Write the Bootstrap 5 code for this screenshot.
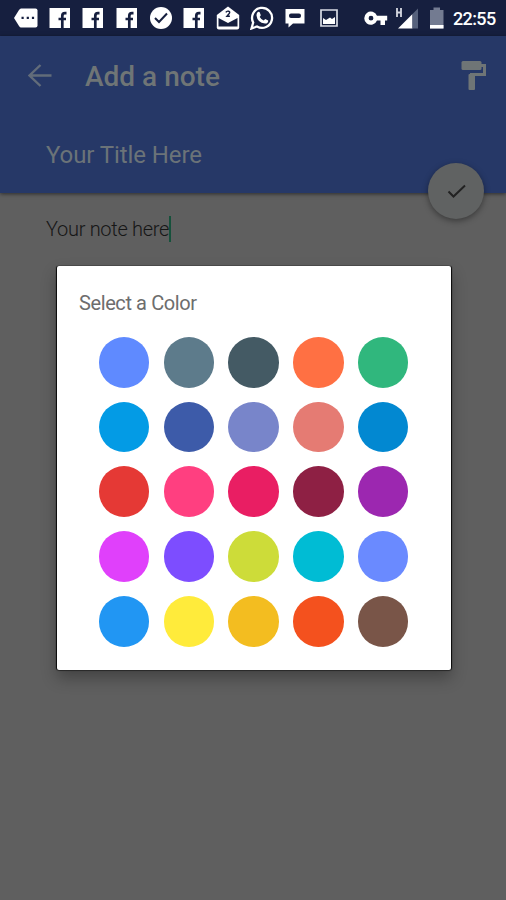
<!DOCTYPE html>
<html lang="en">
<head>
<meta charset="utf-8">
<meta name="viewport" content="width=device-width, initial-scale=1">
<title>Add a note</title>
<link href="https://cdn.jsdelivr.net/npm/bootstrap@5.3.0/dist/css/bootstrap.min.css" rel="stylesheet">
<style>
body{font-family:Roboto,"Noto Sans",sans-serif;background:#5f5f5f;height:900px;overflow:hidden}
svg{display:block;flex:none}
.status-bar{height:36px;background:#161f3f;color:#fff;padding-left:9px}
.notice{width:33.7px;display:flex;justify-content:center}
.status-icons{height:36px}
.sys{width:142px;height:36px;margin-left:18px}
.clock{font-size:18px;font-weight:500;line-height:36px;padding-top:2px;width:44px;letter-spacing:-.6px;white-space:nowrap}
.app-head{height:157px;background:#263867;color:#6f7576;box-shadow:0 1px 4px rgba(0,0,0,.55)}
.toolbar{height:80px;padding:0 19px 0 28px}
.page-name{font-size:28px;font-weight:500;line-height:32px;margin-left:32px;padding-top:1px}
.note-title{font-size:24px;line-height:28px;padding:25px 0 0 46px;color:#6b7378;letter-spacing:-.08px}
.done-btn{position:absolute;right:22px;top:163px;width:56px;height:56px;background:#606262;box-shadow:0 2px 6px rgba(0,0,0,.4)}
.note-text{padding:23px 0 0 46px;font-size:20px;font-weight:300;line-height:27px;color:#161616;letter-spacing:-.3px}
.caret{width:2px;height:26px;background:#16513b}
.picker{position:absolute;left:57px;top:266px;width:394px;height:404px;border-radius:2px;box-shadow:-1px 0 1px #080808,1px 0 1px #080808,0 1px 1px #333,0 8px 16px rgba(0,0,0,.3)}
.picker-title{font-size:20px;line-height:24px;color:#6d6d6d;padding:25px 0 0 22px;letter-spacing:-.4px;font-weight:400}
.swatches{display:grid;grid-template-columns:repeat(5,50.6px);gap:14.15px;padding:22px 0 0 41.8px}
.swatch{height:50.6px}
</style>
<script src="https://cdn.jsdelivr.net/npm/bootstrap@5.3.0/dist/js/bootstrap.bundle.min.js"></script>
</head>
<body class="m-0 position-relative">
<svg width="0" height="0" class="position-absolute"><defs>
<g id="fb"><path fill="#fff" d="M.5 1h20.500v20H.5z"/><path d="M17.500 6.200h-1.500q-2.700 0-2.700 2.800v12M9.500 12H17" fill="none" stroke="#161f3f" stroke-width="2.700"/></g>
</defs></svg>
<div class="status-bar d-flex">
 <div class="status-icons d-flex align-items-center">
  <div class="notice"><svg width="26" height="20" viewBox="0 0 26 20"><path fill="#fff" d="M1 10 6 2q1-1.500 2-1.500h14.500q2 0 2 2v15q0 2-2 2H8q-1 0-2-1.500z"/><path fill="#161f3f" d="M8.500 8.700h2.200v2.400H8.500zm5.200 0h2.200v2.400h-2.200zm5.200 0h2.200v2.400h-2.200z"/></svg></div>
  <div class="notice"><svg width="22" height="22"><use href="#fb"/></svg></div>
  <div class="notice"><svg width="22" height="22"><use href="#fb"/></svg></div>
  <div class="notice"><svg width="22" height="22"><use href="#fb"/></svg></div>
  <div class="notice"><svg width="24" height="24"><circle cx="12" cy="12" r="11" fill="#fff"/><path d="m6 12 4 4 8-8.500" fill="none" stroke="#161f3f" stroke-width="2"/></svg></div>
  <div class="notice"><svg width="22" height="22"><use href="#fb"/></svg></div>
  <div class="notice"><svg width="24" height="24" viewBox="0 0 24 24"><path d="M.8 9 12 .5 23.200 9v12.500q0 2-2 2H2.800q-2 0-2-2z" fill="#fff"/><path d="M2.500 12v8.500h19V12L12 17z" fill="#161f3f"/><path d="M9.800 6.300q1-1.500 2.700-1.100 2 .6.7 2.300l-2.300 2.700h3" fill="none" stroke="#161f3f" stroke-width="1.400"/></svg></div>
  <div class="notice"><svg width="24" height="24"><path d="m1.500 22.500 1.700-6A10 10 0 1 1 7 20.500z" fill="none" stroke="#fff" stroke-width="2.300"/><path d="M7 7q1.500-2 2.700-.8l1.100 3L9.700 11q1.500 2.600 4 3.500l1.500-1.600 3 1.500q.2 3-3.200 3.200Q7.300 16.500 6.500 9.500 6.500 8 7 7z" fill="#fff"/></svg></div>
  <div class="notice"><svg width="20" height="20" viewBox="0 0 20 20"><path fill="#fff" d="M.5 1h19v14.500H8l-4.500 4v-4h-3z"/><rect x="4" y="5.500" width="12" height="4.500" rx="2" fill="#161f3f"/></svg></div>
  <div class="notice"><svg width="20" height="20"><path fill="none" stroke="#d9dce5" stroke-width="1.700" d="M2 2h16v16H2z"/><path fill="#fff" d="m4 10 3 2 4-2.500 2 1.500 3-2v7H4z"/></svg></div>
 </div>
 <div class="sys d-flex align-items-center">
  <svg width="89" height="36"><path fill="#fff" fill-rule="evenodd" d="M13 15.800a6.600 6.600 0 1 0 0 4.700h3.500V25h4.500v-4.500h2.200v-4.700zM7 15.800a2.400 2.400 0 1 1 0 4.800 2.400 2.400 0 0 1 0-4.800z"/><path fill="#fff" d="M48.500 28.500V14L34 28.500z"/><path fill="#56617c" d="m48.500 14 5.500-5.500v20h-5.500z"/><path fill="#737b91" d="M66 10h3.500V7.500h6.500V10h3.500v18.500H66z"/><path fill="#fff" d="M66 25h13.500v3.500H66z"/><path d="M33 8v9M37 8v9M33 12.500h4" fill="none" stroke="#d5d8e0" stroke-width="1.800"/></svg>
  <div class="clock">22:55</div>
 </div>
</div>
<header class="app-head position-relative">
 <div class="toolbar d-flex align-items-center">
  <svg width="25" height="24"><path d="M12.500 1 1.500 11.500l11 10.500M2 11.500h21.500" fill="none" stroke="#626c7a" stroke-width="2.400"/></svg>
  <h1 class="page-name mb-0">Add a note</h1>
  <svg class="ms-auto" width="27" height="30"><rect x="1.500" y="0" width="20" height="9" rx="1.500" fill="#6f7576"/><path d="M20 4.500h4.500v9H11.500V17" fill="none" stroke="#6f7576" stroke-width="3"/><rect x="8.500" y="13" width="6.500" height="16" rx="1" fill="#6f7576"/></svg>
 </div>
 <div class="note-title">Your Title Here</div>
</header>
<button class="done-btn btn border-0 rounded-circle p-0 d-flex align-items-center justify-content-center" aria-label="Save"><svg width="20" height="16"><path d="m2.500 8.500 5 5L19 2.500" fill="none" stroke="#222" stroke-width="2"/></svg></button>
<div class="note-text d-flex"><span>Your note here</span><span class="caret"></span></div>
<div class="picker bg-white" role="dialog">
 <h2 class="picker-title mb-0">Select a Color</h2>
 <div class="swatches" id="swatches"></div>
</div>
<script>
const colors=['#5f8aff','#5d7b8b','#445a64','#ff7043','#30b77d','#039be5','#3d5ba9','#7885ca','#e57b73','#0288d1','#e53935','#ff3f80','#e91e63','#8e2044','#9c27b0','#e040fb','#7d4dff','#cddc39','#00bcd4','#6a8aff','#2196f3','#ffeb3b','#f3bd20','#f4511e','#795548'];
const grid=document.getElementById('swatches');
for(const c of colors){const s=document.createElement('div');s.className='swatch rounded-circle';s.style.backgroundColor=c;grid.append(s)}
</script>
</body>
</html>
